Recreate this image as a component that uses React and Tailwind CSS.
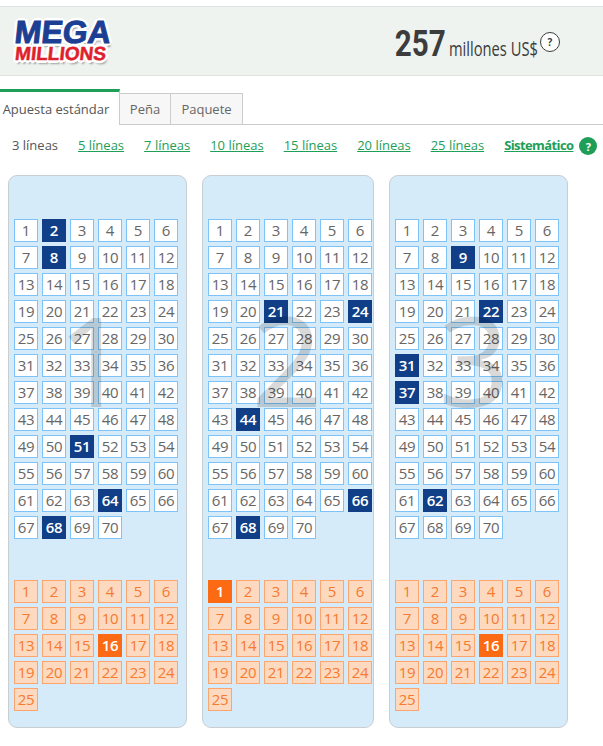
import { useMemo } from 'react';

const FONT = 'font-["Open_Sans",sans-serif]';

const lineLinks = ['5 líneas', '7 líneas', '10 líneas', '15 líneas', '20 líneas', '25 líneas'];

const panels = [
    { label: '1', main: [2, 8, 51, 64, 68], bonus: 16, width: 'w-[179px]' },
    { label: '2', main: [21, 24, 44, 66, 68], bonus: 1, width: 'w-[172px]' },
    { label: '3', main: [9, 22, 31, 37, 62], bonus: 16, width: 'w-[179px]' },
];

function range(count) {
    return Array.from({ length: count }, (_, index) => index + 1);
}

const logoOutline =
    '[text-shadow:3px_0_0_white,-3px_0_0_white,0_3px_0_white,0_-3px_0_white,2px_2px_0_white,-2px_2px_0_white,2px_-2px_0_white,-2px_-2px_0_white,2px_4px_2px_rgba(0,0,0,0.35)]';

function Logo() {
    return (
        <div className="-mt-[1px] flex w-[96px] -skew-x-6 flex-col items-center font-['Liberation_Sans',sans-serif] font-bold">
            <span className={`text-[32px] leading-[25px] text-[#1c3f94] [-webkit-text-stroke:1px_#1c3f94] ${logoOutline}`}>
                MEGA
            </span>
            <span className={`mt-[1px] whitespace-nowrap text-[19px] leading-[15px] text-[#e01f2d] [-webkit-text-stroke:0.5px_#e01f2d] ${logoOutline}`}>
                MILLIONS
            </span>
        </div>
    );
}

function Cell({ value, selected, bonus }) {
    let tone = 'border-[#7dc3f7] bg-white text-[#666666]';
    if (bonus) tone = 'border-[#fda56f] bg-[#fdd9bf] text-[#f67a30]';
    if (selected) tone = 'border-[#103f88] bg-[#103f88] font-semibold text-white';
    if (selected && bonus) tone = 'border-[#fd6a14] bg-[#fd6a14] font-semibold text-white';

    return (
        <div className={`flex h-[23px] w-6 items-center justify-center border text-[15px] leading-none tracking-[-0.3px] ${tone}`}>
            {value}
        </div>
    );
}

function Panel({ panel }) {
    const mainNumbers = useMemo(() => range(70), []);
    const bonusNumbers = useMemo(() => range(25), []);

    return (
        <div className={`relative h-[553px] shrink-0 rounded-[9px] border border-[#c8ced2] bg-[#d6ebf9] pl-[5px] pt-[43px] ${panel.width}`}>
            <div className="grid grid-cols-[repeat(6,24px)] gap-x-1 gap-y-1">
                {mainNumbers.map((n) => (
                    <Cell key={n} value={n} selected={panel.main.includes(n)} />
                ))}
            </div>
            <div className="mt-[41px] grid grid-cols-[repeat(6,24px)] gap-x-1 gap-y-1">
                {bonusNumbers.map((n) => (
                    <Cell key={n} value={n} selected={panel.bonus === n} bonus />
                ))}
            </div>
            <span className="pointer-events-none absolute left-[28px] top-[120px] w-[112px] text-center text-[125px] leading-none text-black/15">
                {panel.label}
            </span>
        </div>
    );
}

export default function App() {
    return (
        <div className={`h-[746px] w-[603px] overflow-hidden bg-white ${FONT}`}>
            <div className="h-[6px]" />
            <header className="flex h-[70px] items-center justify-between border-y border-[#dfe3e1] bg-[#eef3f0] pl-[14px] pr-[43px]">
                <Logo />
                <div className="mt-[5px] flex items-center">
                    <span className="origin-right translate-x-[1px] scale-x-[0.8] font-['Roboto',sans-serif] text-[37px] font-bold leading-none text-[#3c3c3c]">
                        257
                    </span>
                    <span className="ml-[4px] mt-[10px] w-[88px] origin-left scale-x-[0.735] whitespace-nowrap text-[20px] leading-none text-[#3c3c3c]">
                        millones US$
                    </span>
                    <span className="ml-[3px] mt-[-3px] flex size-5 items-center justify-center rounded-full border border-[#3c3c3c] bg-white text-[10px] font-bold leading-none text-[#3c3c3c]">
                        ?
                    </span>
                </div>
            </header>

            <nav className="mt-[13px] flex h-[36px] items-end border-b border-[#cccccc] text-[13px]">
                <div className="flex h-[36px] w-[120px] translate-y-px items-center justify-center border-r border-t-[3px] border-[#cccccc] border-t-[#1e9e57] bg-white pr-[7px] pt-[2px] text-[#555555]">
                    Apuesta estándar
                </div>
                <div className="flex h-[32px] w-[51px] translate-y-px items-center justify-center border-y border-r border-[#cccccc] bg-[#f7f7f7] pt-[2px] text-[#666666]">
                    Peña
                </div>
                <div className="flex h-[32px] w-[72px] translate-y-px items-center justify-center border-y border-r border-[#cccccc] bg-[#f7f7f7] pt-[2px] text-[#666666]">
                    Paquete
                </div>
            </nav>

            <div className="mt-[11px] flex h-[18px] items-center whitespace-nowrap pl-[12px] text-[13px] leading-none">
                <span className="w-[66px] text-[#555555]">3 líneas</span>
                <div className="flex gap-5">
                    {lineLinks.map((link) => (
                        <a key={link} href="#" className="text-[#1e9e57] underline">
                            {link}
                        </a>
                    ))}
                </div>
                <a href="#" className="ml-5 font-bold tracking-[-0.6px] text-[#1e9e57] underline">
                    Sistemático
                </a>
                <span className="ml-[6px] mt-[2px] flex size-[18px] items-center justify-center rounded-full bg-[#1e9e57] text-[11px] font-bold text-white">
                    ?
                </span>
            </div>

            <div className="mt-[21px] flex pl-2">
                <Panel panel={panels[0]} />
                <div className="w-[15px] shrink-0" />
                <Panel panel={panels[1]} />
                <div className="w-[15px] shrink-0" />
                <Panel panel={panels[2]} />
            </div>
        </div>
    );
}
